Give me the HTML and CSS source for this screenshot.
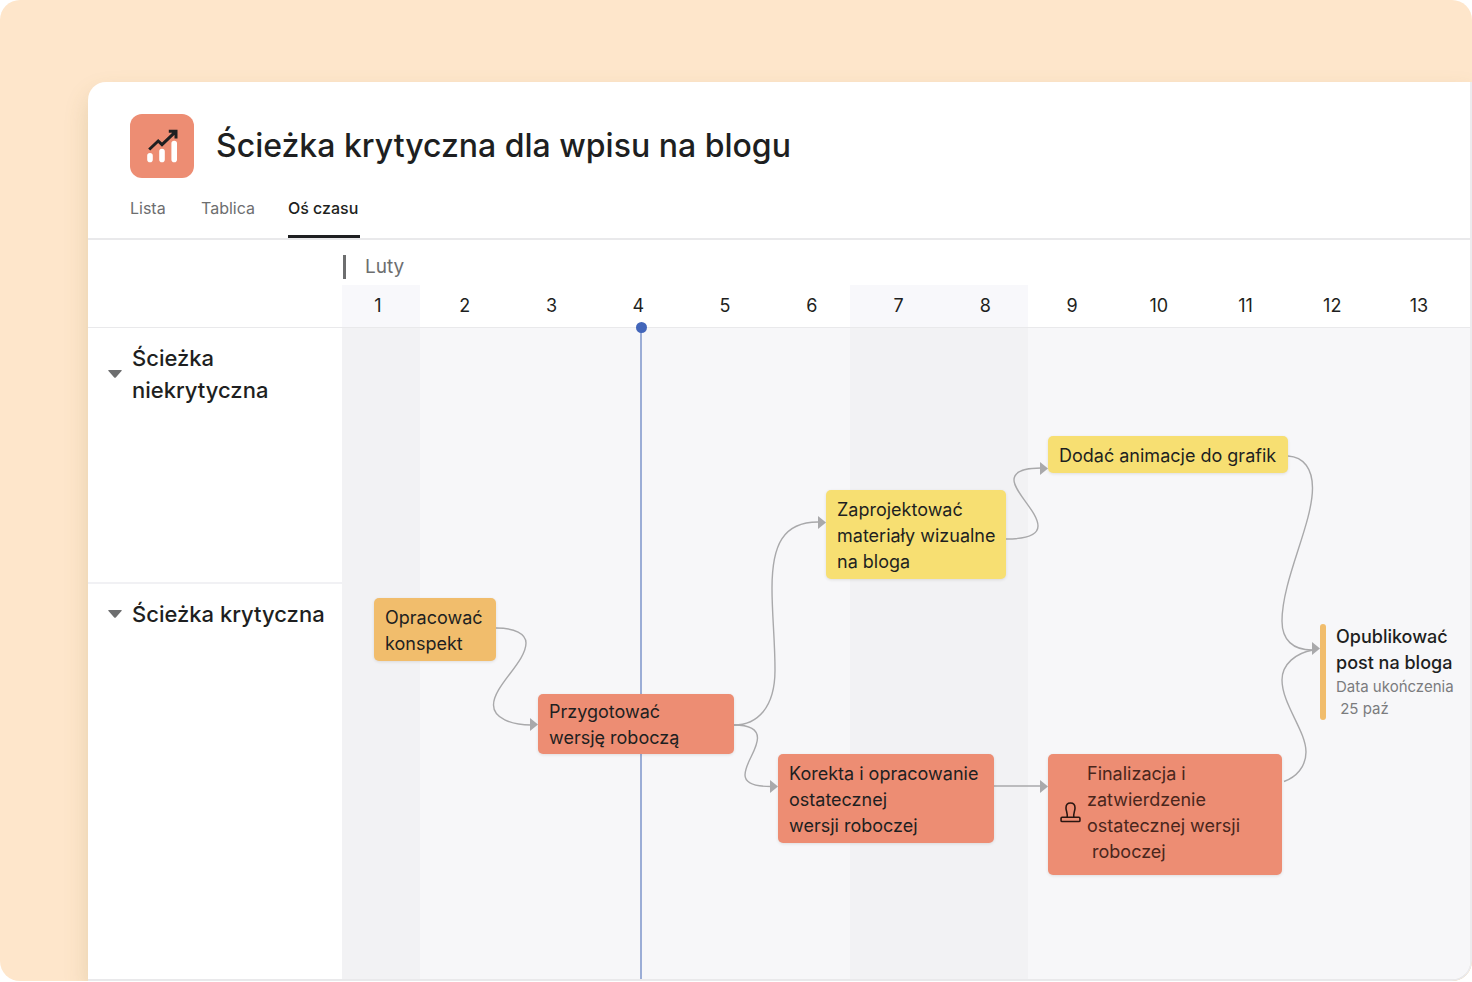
FILE: index.html
```html
<!DOCTYPE html>
<html lang="pl">
<head>
<meta charset="utf-8">
<meta name="viewport" content="width=device-width, initial-scale=1">
<title>Ścieżka krytyczna dla wpisu na blogu</title>
<link rel="stylesheet" href="styles.css">
</head>
<body>
<div class="stage">
  <main class="panel">
    <header class="panel-header">
      <div class="project">
        <svg class="project-icon" viewBox="0 0 64 64" aria-hidden="true">
          <rect width="64" height="64" rx="12" fill="#ed8d73"/>
          <g stroke="#fff" stroke-width="5.6" stroke-linecap="round">
            <path d="M20 41.8v3.6M32 37.6v7.8M44.2 29.6v15.8"/>
          </g>
          <path d="M19.200 35.500l9-8.500 3.800 3.600 13.400-12.800M38.800 17.200h7.200v7.200" fill="none" stroke="#1e1f21" stroke-width="3"/>
        </svg>
        <h1 class="project-title">Ścieżka krytyczna dla wpisu na blogu</h1>
      </div>
      <nav class="tabs">
        <a class="tab" href="#lista">Lista</a>
        <a class="tab" href="#tablica">Tablica</a>
        <a class="tab tab-active" href="#os-czasu" aria-current="page">Oś czasu</a>
      </nav>
    </header>

    <div class="scale">
      <div class="month">Luty</div>
      <ol class="days">
        <li>1</li><li>2</li><li>3</li><li>4</li><li>5</li><li>6</li><li>7</li><li>8</li><li>9</li><li>10</li><li>11</li><li>12</li><li>13</li>
      </ol>
    </div>

    <div class="board">
      <aside class="sections">
        <section class="section">
          <button class="section-toggle" type="button" aria-expanded="true">
            <svg class="caret" viewBox="0 0 14 8" aria-hidden="true"><path d="M1 0h12q1.400 0 .5 1L8 7.300q-1 1-2 0L.5 1Q-.4 0 1 0z"/></svg>
            <span>Ścieżka niekrytyczna</span>
          </button>
        </section>
        <section class="section">
          <button class="section-toggle" type="button" aria-expanded="true">
            <svg class="caret" viewBox="0 0 14 8" aria-hidden="true"><path d="M1 0h12q1.400 0 .5 1L8 7.300q-1 1-2 0L.5 1Q-.4 0 1 0z"/></svg>
            <span>Ścieżka krytyczna</span>
          </button>
        </section>
      </aside>

      <div class="canvas">
        <div class="today"></div>
        <svg class="links" width="1128" height="652" viewBox="342 328 1128 652" aria-hidden="true">
          <g class="link-lines">
            <path d="M496 628C515 628 526 634 526 643C526 662 493.500 686 493.500 705C493.500 718 511 725 531 725"/>
            <path d="M734 725C757 725 775 708 775 670C775 640 772 616 772 588C772 545 783 522 818 522"/>
            <path d="M734 725C750 725 757.500 729 757.500 738C757.500 750 745 763 745 775C745 783 754 786.500 771 786.500"/>
            <path d="M1006 539C1028 539 1038 535 1038 526C1038 512 1014 492 1014 480C1014 471 1024 468 1041 468"/>
            <path d="M994 786H1041"/>
            <path d="M1288 456C1304 457 1312.500 469 1312.500 488C1312.500 524 1282 580 1282 621C1282 640 1293 650 1312 650"/>
            <path d="M1284 781.500C1296 777 1306 767 1306 752C1306 731 1282 704 1282 680C1282 664 1296 653 1313 650"/>
          </g>
          <g class="link-heads">
            <path d="M530 718l8 6.500-8 6.500z"/>
            <path d="M818 516l8 6.500-8 6.500z"/>
            <path d="M770 780l8 6.500-8 6.500z"/>
            <path d="M1040 462l8 6.500-8 6.500z"/>
            <path d="M1040 780l8 6.500-8 6.500z"/>
            <path d="M1312 642l8 6.500-8 6.500z"/>
          </g>
        </svg>

        <article class="task task-outline">Opracować<br>konspekt</article>
        <article class="task task-draft">Przygotować<br>wersję roboczą</article>
        <article class="task task-visuals">Zaprojektować<br>materiały wizualne<br>na bloga</article>
        <article class="task task-animation">Dodać animacje do grafik</article>
        <article class="task task-review">Korekta i opracowanie<br>ostatecznej<br>wersji roboczej</article>
        <article class="task task-final">
          <svg class="stamp" viewBox="0 0 20 20" aria-hidden="true">
            <path d="M2 14.600h16q1 0 1 1v2q0 1-1 1H2q-1 0-1-1v-2q0-1 1-1zM6.800 14.600C7.600 11.500 5.700 8.500 5.700 5.600C5.700 2.800 7.500 1 10 1s4.300 1.800 4.300 4.600C14.300 8.500 12.400 11.500 13.200 14.600"/>
          </svg>
          <span>Finalizacja i<br>zatwierdzenie<br>ostatecznej wersji<br>&nbsp;roboczej</span>
        </article>
        <article class="milestone">
          <h2 class="milestone-title">Opublikować<br>post na bloga</h2>
          <p class="milestone-due">Data ukończenia<br>&nbsp;25 paź</p>
        </article>
      </div>
    </div>
  </main>
</div>
</body>
</html>
```
FILE: styles.css
```css
* {
  box-sizing: border-box;
}

body {
  margin: 0;
  background: #fff;
  color: #1e1f21;
  font-family: Inter, "Liberation Sans", sans-serif;
  font-size: 18px;
  line-height: 26px;
}

.stage {
  display: flex;
  min-height: calc(100vh - 1px);
  padding: 82px 0 0 88px;
  border-radius: 20px;
  background: #fee6cb;
  overflow: hidden;
}

.panel {
  display: flex;
  flex: 1;
  flex-direction: column;
  min-width: 0;
  border-right: 2px solid #ececee;
  border-bottom: 2px solid #e9e9eb;
  border-radius: 18px 0 20px 0;
  background: #fff;
  box-shadow: 0 12px 24px rgba(130, 120, 50, 0.2);
  overflow: hidden;
}

.panel-header {
  padding: 32px 42px 0;
  border-bottom: 2px solid #e9e9eb;
}

.project {
  display: flex;
  align-items: center;
  gap: 22px;
}

.project-icon {
  width: 64px;
  height: 64px;
}

.project-title {
  margin: 0;
  font-size: 32px;
  font-weight: 500;
  line-height: 40px;
}

.tabs {
  display: flex;
  gap: 33px;
}

.tab {
  min-width: 38px;
  padding: 18px 0 15px;
  border-bottom: 3px solid transparent;
  color: #6d6e6f;
  font-size: 16px;
  line-height: 24px;
  text-decoration: none;
}

.tab-active {
  min-width: 72px;
  border-color: #1e1f21;
  color: #1e1f21;
  font-weight: 500;
}

.scale {
  margin-left: 254px;
}

.month {
  margin: 15px 0 6px 1px;
  padding-left: 19px;
  border-left: 3px solid #6d6e6f;
  color: #6d6e6f;
  font-size: 19px;
  line-height: 24px;
}

.days {
  display: flex;
  justify-content: space-between;
  margin: 0;
  padding: 8px 29px 8px 14px;
  background:
    linear-gradient(#f8f8fb, #f8f8fb) 0 0 / 78px 100% no-repeat,
    linear-gradient(#f8f8fb, #f8f8fb) 508px 0 / 178px 100% no-repeat;
  list-style: none;
}

.days li {
  width: 44px;
  text-align: center;
}

.board {
  display: flex;
  flex: 1;
  border-top: 1px solid #e9e9eb;
}

.sections {
  display: flex;
  flex: 0 0 254px;
  flex-direction: column;
}

.section {
  padding: 14px 8px 0 20px;
}

.section:first-child {
  min-height: 254px;
}

.section + .section {
  border-top: 2px solid #f1f1f4;
}

.section-toggle {
  display: flex;
  align-items: center;
  gap: 10px;
  width: 100%;
  padding: 0;
  border: 0;
  background: none;
  color: inherit;
  font: 500 22px/32px Inter, "Liberation Sans", sans-serif;
  text-align: left;
}

.caret {
  flex: none;
  width: 14px;
  height: 8px;
  fill: #6d6e6f;
}

.canvas {
  position: relative;
  flex: 1;
  min-height: 651px;
  background:
    linear-gradient(#f2f2f4, #f2f2f4) 0 0 / 78px 100% no-repeat,
    linear-gradient(#f2f2f4, #f2f2f4) 508px 0 / 178px 100% no-repeat,
    #f7f7f9;
}

.today {
  position: absolute;
  top: 0;
  bottom: 0;
  left: 298px;
  width: 2px;
  background: #9badd6;
}

.today::before {
  content: "";
  position: absolute;
  top: -6px;
  left: -4px;
  width: 11px;
  height: 11px;
  border-radius: 50%;
  background: #4366ba;
}

.links {
  position: absolute;
  top: 0;
  left: 0;
}

.link-lines {
  fill: none;
  stroke: #a9a9ab;
  stroke-width: 1.4;
}

.link-heads {
  fill: #a9a9ab;
}

.task {
  position: absolute;
  padding: 7px 0 5px 11px;
  border-radius: 5px;
  box-shadow: 0 1px 3px rgba(60, 50, 40, 0.12);
  white-space: nowrap;
}

.task-outline {
  top: 270px;
  left: 32px;
  width: 122px;
  height: 63px;
  background: #f1bd6c;
}

.task-draft {
  top: 366px;
  left: 196px;
  width: 196px;
  height: 60px;
  padding-top: 5px;
  background: #ed8d73;
}

.task-visuals {
  top: 162px;
  left: 484px;
  width: 180px;
  height: 89px;
  background: #f7df72;
}

.task-animation {
  top: 108px;
  left: 706px;
  width: 240px;
  height: 37px;
  background: #f7df72;
}

.task-review {
  top: 426px;
  left: 436px;
  width: 216px;
  height: 89px;
  background: #ed8d73;
}

.task-final {
  display: flex;
  align-items: center;
  gap: 6px;
  top: 426px;
  left: 706px;
  width: 234px;
  height: 121px;
  padding: 6px 0 10px 12px;
  background: #ed8d73;
  color: #4a261c;
}

.stamp {
  width: 21px;
  height: 21px;
  fill: none;
  stroke: #2a1611;
  stroke-width: 1.5;
}

.milestone {
  position: absolute;
  top: 296px;
  left: 978px;
  padding-left: 16px;
  white-space: nowrap;
}

.milestone::before {
  content: "";
  position: absolute;
  top: 0;
  bottom: 0;
  left: 0;
  width: 6px;
  border-radius: 3px;
  background: #f1bd6c;
}

.milestone-title {
  margin: 0;
  font-size: 18px;
  font-weight: 500;
  line-height: 26px;
}

.milestone-due {
  margin: 0;
  color: #7b7c7e;
  font-size: 15px;
  line-height: 22px;
}
```
